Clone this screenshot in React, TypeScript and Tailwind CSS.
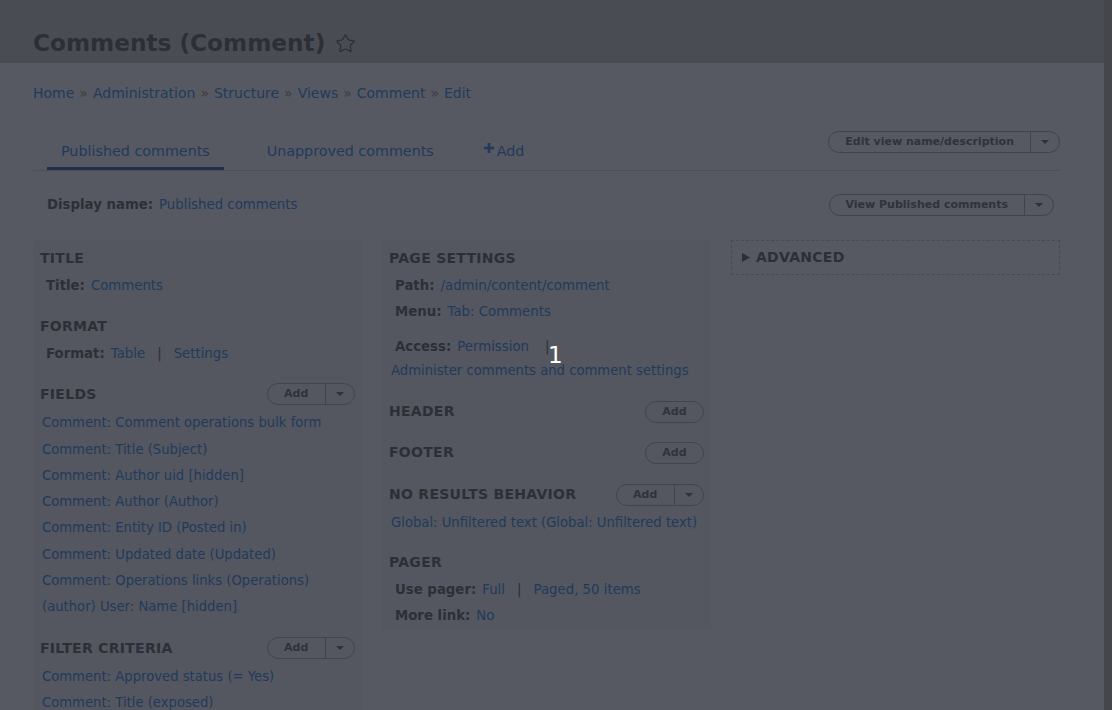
import { Star } from 'lucide-react';

const link = 'text-[#223a5c]';
const dark = 'text-[#2d2f36]';

const DropButton = ({ label, split = true, className = '' }: { label: string; split?: boolean; className?: string }) => (
  <div className={`flex h-[22px] items-stretch rounded-full border border-[#42444b] text-[11px] font-bold text-[#30323a] ${className}`}>
    <span className="flex items-center px-[16px]">{label}</span>
    {split && (
      <span className="flex w-[29px] items-center justify-center border-l border-[#42444b]">
        <svg width="10" height="6" viewBox="0 0 10 6">
          <path d="M1 1h8L5 5z" fill="#30323a" />
        </svg>
      </span>
    )}
  </div>
);

const Heading = ({ children, action }: { children: React.ReactNode; action?: React.ReactNode }) => (
  <div className="flex h-[22px] items-center justify-between pl-[7px] pr-[7px]">
    <h3 className={`text-[14px] font-bold uppercase tracking-[0.02em] ${dark}`}>{children}</h3>
    {action}
  </div>
);

const Row = ({ label, children }: { label?: string; children: React.ReactNode }) => (
  <div className="flex h-[26px] items-center gap-[6px] pl-[13px] text-[13.3px]">
    {label && <span className={`font-bold ${dark}`}>{label}</span>}
    {children}
  </div>
);

const Item = ({ children }: { children: React.ReactNode }) => (
  <div className={`flex h-[26.3px] items-center pl-[9px] text-[13.2px] ${link}`}>{children}</div>
);

const Sep = () => <span className={`mx-[6px] ${dark}`}>|</span>;

export default function App() {
  const fields = [
    'Comment: Comment operations bulk form',
    'Comment: Title (Subject)',
    'Comment: Author uid [hidden]',
    'Comment: Author (Author)',
    'Comment: Entity ID (Posted in)',
    'Comment: Updated date (Updated)',
    'Comment: Operations links (Operations)',
    '(author) User: Name [hidden]',
  ];

  return (
    <div className="relative flex h-[710px] w-full overflow-hidden bg-[#565962] font-['DejaVu_Sans',sans-serif]">
      <div className="flex-1">
        <header className="flex h-[63px] items-center gap-[10px] bg-[#4a4c53] pl-[33px] pt-[23px]">
          <h1 className={`text-[23.2px] font-bold ${dark}`}>Comments (Comment)</h1>
          <Star size={21} strokeWidth={1.4} className="text-[#2d2f36]" />
        </header>

        <div className="pl-[33px] pr-[44px]">
          <nav className="mt-[20px] flex h-[20px] items-center gap-[5px] text-[14px]">
            {['Home', 'Administration', 'Structure', 'Views', 'Comment', 'Edit'].map((b, i) => (
              <span key={b} className="flex items-center gap-[5px]">
                {i > 0 && <span className="text-[#3a3c44]">»</span>}
                <span className={link}>{b}</span>
              </span>
            ))}
          </nav>

          <div className="mt-[24px] flex h-[44px] items-end justify-between border-b border-[#544b57]">
            <div className="ml-[14px] flex items-end text-[14.3px]">
              <span className={`border-b-[3px] border-[#232e48] px-[14px] pb-[5px] ${link}`}>Published comments</span>
              <span className={`ml-[29px] border-b-[3px] border-transparent px-[14px] pb-[5px] ${link}`}>Unapproved comments</span>
              <span className={`ml-[22px] flex items-center gap-[3px] border-b-[3px] border-transparent px-[14px] pb-[5px] ${link}`}>
                <svg width="10" height="10" viewBox="0 0 11 11" className="-mt-[6px]">
                  <path d="M4 0h3v4h4v3H7v4H4V7H0V4h4z" fill="#223a5c" />
                </svg>
                Add
              </span>
            </div>
            <DropButton label="Edit view name/description" className="mb-[17px]" />
          </div>

          <div className="mt-[23px] flex h-[22px] items-center justify-between pl-[14px] pr-[6px]">
            <div className="flex items-center gap-[6px] text-[13.3px]">
              <span className={`font-bold ${dark}`}>Display name:</span>
              <span className={link}>Published comments</span>
            </div>
            <DropButton label="View Published comments" />
          </div>

          <div className="mt-[24px] grid grid-cols-3 gap-[20px]">
            <div className="bg-[#54575f] pb-[20px] pt-[7px]">
              <Heading>Title</Heading>
              <div className="mt-[4px]"><Row label="Title:"><span className={link}>Comments</span></Row></div>
              <div className="mt-[16px]"><Heading>Format</Heading></div>
              <div className="mt-[4px]">
                <Row label="Format:"><span className={link}>Table</span><Sep /><span className={link}>Settings</span></Row>
              </div>
              <div className="mt-[16px]"><Heading action={<DropButton label="Add" className="w-[88px] justify-between" />}>Fields</Heading></div>
              <div className="mt-[5px]">
                {fields.map((f) => <Item key={f}>{f}</Item>)}
              </div>
              <div className="mt-[17px]"><Heading action={<DropButton label="Add" className="w-[88px] justify-between" />}>Filter criteria</Heading></div>
              <div className="mt-[4px]">
                <Item>Comment: Approved status (= Yes)</Item>
                <Item>Comment: Title (exposed)</Item>
              </div>
            </div>

            <div className="h-[390px] bg-[#54575f] pt-[7px]">
              <Heading>Page settings</Heading>
              <div className="mt-[4px]">
                <Row label="Path:"><span className={link}>/admin/content/comment</span></Row>
                <Row label="Menu:"><span className={link}>Tab: Comments</span></Row>
              </div>
              <div className="mt-[9px]">
                <Row label="Access:"><span className={link}>Permission</span><span className={`ml-[10px] ${dark}`}>|</span></Row>
                <div className={`mt-[1px] pl-[9px] text-[13.2px] ${link}`}>Administer comments and comment settings</div>
              </div>
              <div className="mt-[20px]"><Heading action={<DropButton label="Add" split={false} className="w-[59px] justify-center" />}>Header</Heading></div>
              <div className="mt-[19px]"><Heading action={<DropButton label="Add" split={false} className="w-[59px] justify-center" />}>Footer</Heading></div>
              <div className="mt-[20px]"><Heading action={<DropButton label="Add" className="w-[88px] justify-between" />}>No results behavior</Heading></div>
              <div className="mt-[4px]"><Item>Global: Unfiltered text (Global: Unfiltered text)</Item></div>
              <div className="mt-[15px]"><Heading>Pager</Heading></div>
              <div className="mt-[4px]">
                <Row label="Use pager:"><span className={link}>Full</span><Sep /><span className={link}>Paged, 50 items</span></Row>
                <Row label="More link:"><span className={link}>No</span></Row>
              </div>
            </div>

            <div>
              <div className="flex h-[35px] items-center gap-[6px] border border-dashed border-[#4e4852] pl-[10px]">
                <svg width="8" height="9" viewBox="0 0 8 9">
                  <path d="M0 0l8 4.5L0 9z" fill="#2d2f36" />
                </svg>
                <span className={`text-[14px] font-bold uppercase tracking-[0.02em] ${dark}`}>Advanced</span>
              </div>
            </div>
          </div>
        </div>
      </div>
      <div className="w-[8px] bg-[#44464c]" />
      <span className="absolute left-[548px] top-[344px] text-[23px] leading-none text-white">1</span>
    </div>
  );
}
